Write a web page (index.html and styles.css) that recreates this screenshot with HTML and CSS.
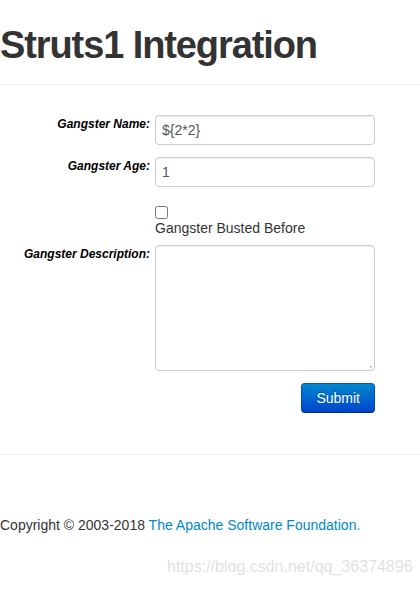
FILE: index.html
```html
<!DOCTYPE html>
<html lang="en">
<head>
    <meta charset="UTF-8">
    <title>Struts1 Integration</title>
    <link rel="stylesheet" href="styles.css">
</head>
<body>

<div class="page-header">
    <h1>Struts1 Integration</h1>
</div>

<form class="gangster-form" onsubmit="return false;">
    <label class="control-label" for="name">Gangster Name:</label>
    <input type="text" id="name" class="field" value="${2*2}">

    <label class="control-label" for="age">Gangster Age:</label>
    <input type="text" id="age" class="field" value="1">

    <span></span>
    <div class="check-row">
        <input type="checkbox" id="busted" class="check">
        <label for="busted">Gangster Busted Before</label>
    </div>

    <label class="control-label" for="description">Gangster Description:</label>
    <textarea id="description" class="field area"></textarea>

    <span></span>
    <div class="actions">
        <button type="submit" class="btn-primary">Submit</button>
    </div>
</form>

<hr class="footer-rule">

<footer>
    Copyright &copy; 2003-2018 <a href="#">The Apache Software Foundation.</a>
</footer>

<div class="watermark">https://blog.csdn.net/qq_36374896</div>

</body>
</html>
```

FILE: styles.css
```css
body {
    font-family: "Liberation Sans", Arial, sans-serif;
    font-size: 14px;
    line-height: 20px;
    margin: 0;
    padding: 0;
    color: #333;
    background-color: #fff;
}

.page-header {
    border-bottom: 1px solid #eee;
    padding: 25px 0 19px;
}

.page-header h1 {
    margin: 0;
    font-size: 38px;
    line-height: 40px;
    font-weight: bold;
    letter-spacing: -1.1px;
}

.gangster-form {
    display: grid;
    grid-template-columns: 150px 220px;
    column-gap: 5px;
    row-gap: 12px;
    padding-top: 30px;
}

.control-label {
    text-align: right;
    font-size: 12px;
    font-weight: bold;
    font-style: italic;
    color: #000;
    line-height: 16px;
    padding-top: 1px;
}

.field {
    box-sizing: border-box;
    width: 220px;
    height: 30px;
    padding: 4px 6px;
    margin: 0;
    font-family: inherit;
    font-size: 14px;
    line-height: 20px;
    color: #555;
    border: 1px solid #ccc;
    border-radius: 4px;
    box-shadow: inset 0 1px 1px rgba(0, 0, 0, 0.075);
}

.area {
    display: block;
    height: 126px;
    resize: none;
    background-image:
        radial-gradient(circle, #bbb 1px, transparent 1px);
    background-size: 3px 3px;
    background-position: right 2px bottom 2px;
    background-repeat: no-repeat;
}

.check-row {
    box-sizing: border-box;
    height: 34px;
    padding-top: 7px;
}

.check {
    display: block;
    width: 13px;
    height: 13px;
    margin: 0;
}

.check-row label {
    display: block;
    line-height: 16px;
    margin-top: 1px;
}

.actions {
    display: flex;
    justify-content: flex-end;
}

.btn-primary {
    font-family: inherit;
    font-size: 14px;
    line-height: 20px;
    height: 30px;
    padding: 0 14px;
    color: #fff;
    border: 1px solid #0044cc;
    border-color: #0055cc #0044cc #002a80;
    border-radius: 4px;
    background-image: linear-gradient(to bottom, #0088cc, #0044cc);
    text-shadow: 0 -1px 0 rgba(0, 0, 0, 0.25);
    cursor: pointer;
}

.footer-rule {
    margin: 41px 0 0;
    border: 0;
    border-top: 1px solid #eee;
}

footer {
    padding-top: 60px;
}

footer a {
    color: #0088cc;
    text-decoration: none;
}

.watermark {
    margin-top: 22px;
    padding-left: 167px;
    font-size: 16px;
    color: #e2e2e2;
}
```
